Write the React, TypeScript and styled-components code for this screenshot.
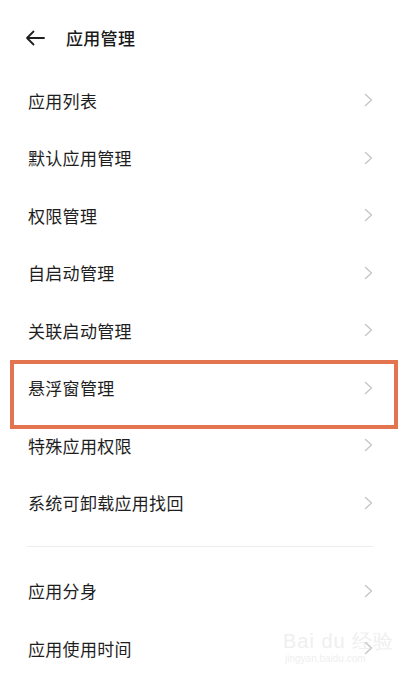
import styled, { createGlobalStyle } from "styled-components";

const GlobalStyle = createGlobalStyle`
  html, body {
    margin: 0;
    padding: 0;
    background: #ffffff;
  }
  body {
    font-family: "Noto Sans CJK SC", "Noto Sans", sans-serif;
    color: #1f1f1f;
  }
`;

const groups: string[][] = [
  [
    "应用列表",
    "默认应用管理",
    "权限管理",
    "自启动管理",
    "关联启动管理",
    "悬浮窗管理",
    "特殊应用权限",
    "系统可卸载应用找回",
  ],
  ["应用分身", "应用使用时间"],
];

const HIGHLIGHTED = "悬浮窗管理";

const BackArrow = () => (
  <svg width="20" height="16" viewBox="0 0 20 16" fill="none">
    <path
      d="M19 8H2M8.5 1.5L2 8l6.5 6.5"
      stroke="#1f1f1f"
      strokeWidth="1.8"
      strokeLinecap="round"
      strokeLinejoin="round"
    />
  </svg>
);

const Chevron = () => (
  <svg width="9" height="14" viewBox="0 0 9 14" fill="none">
    <path
      d="M1.5 1.5L7.5 7l-6 5.5"
      stroke="#c6c6c6"
      strokeWidth="1.4"
      strokeLinecap="round"
      strokeLinejoin="round"
    />
  </svg>
);

const App = () => {
  return (
    <Page>
      <GlobalStyle />
      <Header>
        <BackButton>
          <BackArrow />
        </BackButton>
        <Title>应用管理</Title>
      </Header>
      {groups.map((items, gi) => (
        <Group key={gi}>
          {gi > 0 && <Divider />}
          {items.map((label) => (
            <Row key={label}>
              <Label>{label}</Label>
              <Chevron />
              {label === HIGHLIGHTED && <Highlight />}
            </Row>
          ))}
        </Group>
      ))}
      <Watermark>
        <span className="logo">Bai du 经验</span>
        <span className="url">jingyan.baidu.com</span>
      </Watermark>
    </Page>
  );
};

export default App;

const Page = styled.div`
  position: relative;
  width: 400px;
  height: 685px;
  overflow: hidden;
  background: #fff;
`;

const Header = styled.div`
  height: 71px;
  display: flex;
  align-items: center;
  padding: 4px 0 0 25px;
  box-sizing: border-box;
`;

const BackButton = styled.div`
  width: 20px;
  height: 16px;
  display: flex;
  align-items: center;
  margin-right: 21px;
`;

const Title = styled.div`
  font-size: 17px;
  font-weight: 500;
  letter-spacing: 0.3px;
  color: #1a1a1a;
`;

const Group = styled.div`
  display: flex;
  flex-direction: column;
  padding-top: 0.5px;
`;

const Divider = styled.div`
  height: 1px;
  background: #ececec;
  margin: 14px 27px 15px 27px;
`;

const Row = styled.div`
  position: relative;
  height: 57.5px;
  display: flex;
  align-items: center;
  justify-content: space-between;
  padding: 0 27px 0 28px;
  box-sizing: border-box;
`;

const Label = styled.div`
  font-size: 17px;
  font-weight: 400;
  letter-spacing: 0.3px;
  color: #1e1e1e;
`;

const Highlight = styled.div`
  position: absolute;
  left: 10px;
  right: 2px;
  top: 1px;
  bottom: -12px;
  border: 4px solid #e2754f;
  pointer-events: none;
`;

const Watermark = styled.div`
  position: absolute;
  left: 283px;
  top: 630px;
  display: flex;
  flex-direction: column;
  align-items: flex-start;
  opacity: 0.35;
  color: #d2d2d2;

  .logo {
    font-family: "Liberation Sans", sans-serif;
    font-size: 20px;
    font-weight: 400;
    line-height: 22px;
    letter-spacing: 1px;
  }

  .url {
    font-family: "Liberation Sans", sans-serif;
    font-size: 10px;
    line-height: 14px;
    margin-left: 2px;
  }
`;
